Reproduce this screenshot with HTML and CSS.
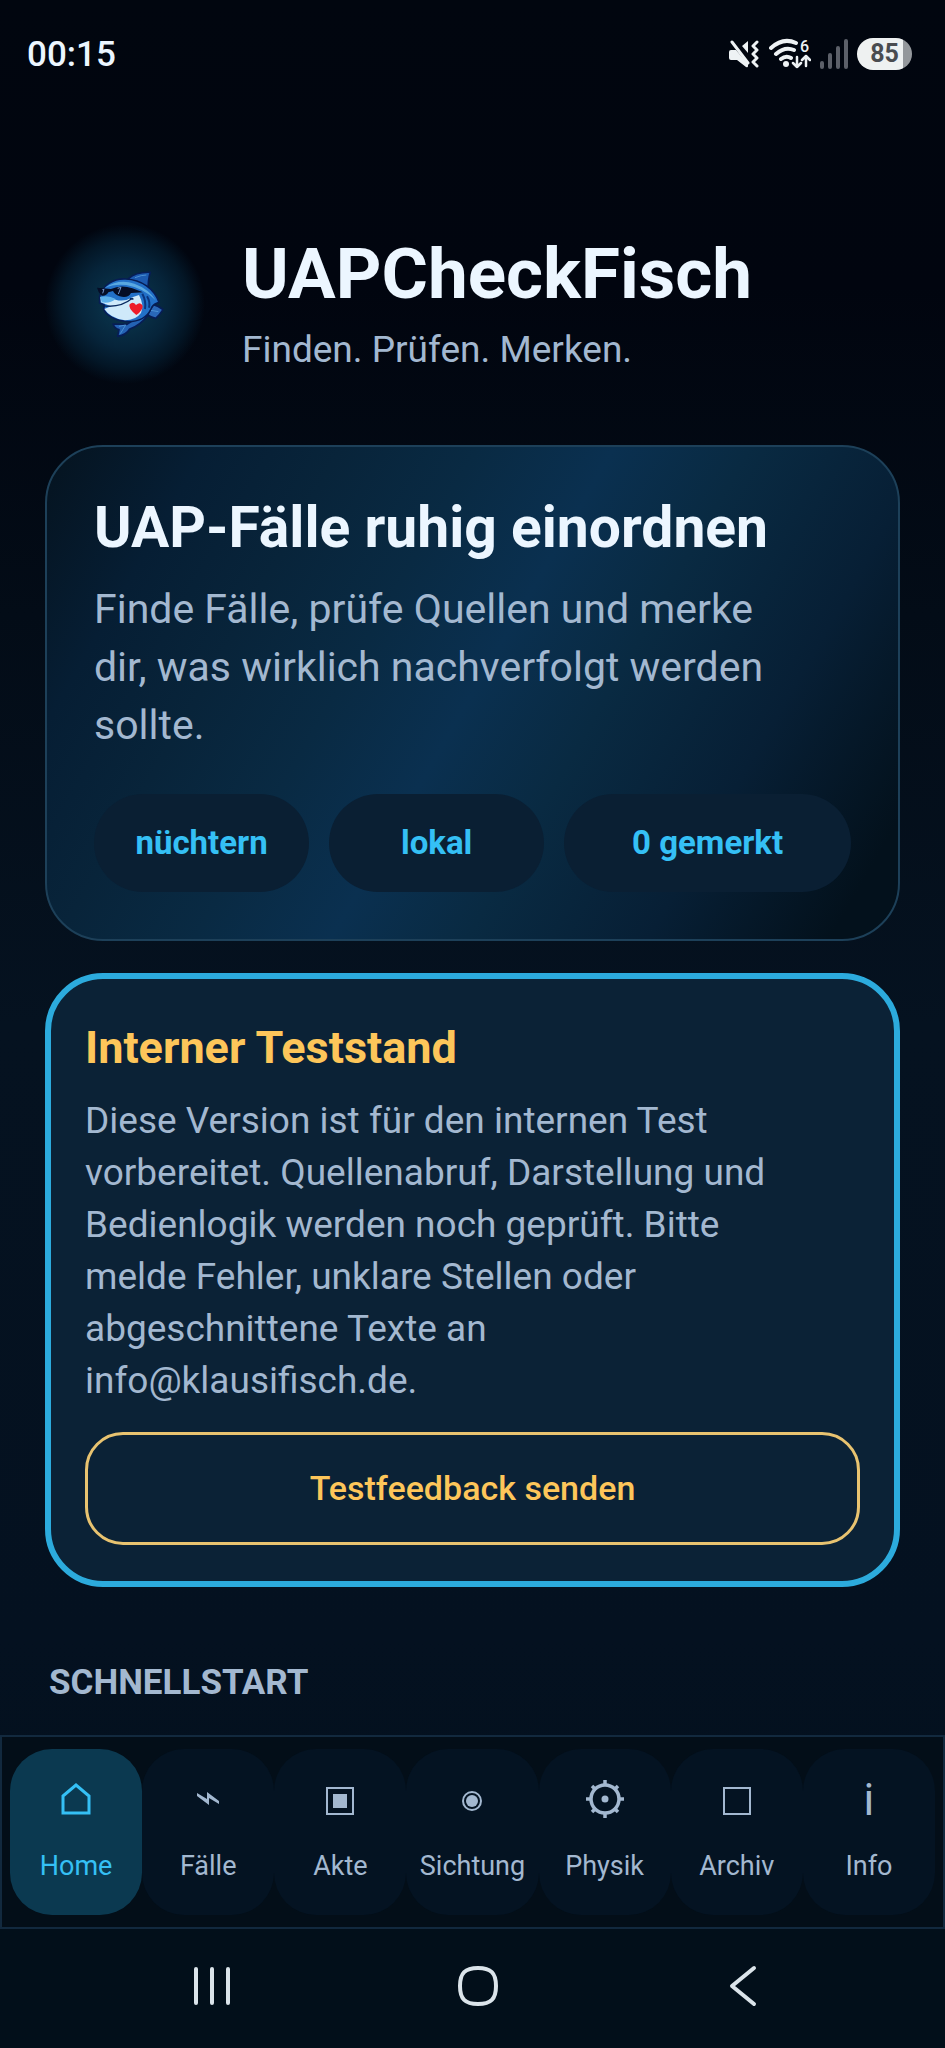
FILE: index.html
```html
<!DOCTYPE html>
<html lang="de">
<head>
<meta charset="utf-8">
<meta name="viewport" content="width=device-width, initial-scale=1">
<title>UAPCheckFisch</title>
<link rel="stylesheet" href="styles.css">
</head>
<body>
<div class="status-bar">
  <time class="clock">00:15</time>
  <div class="status-icons">
    <svg class="ic-mute" viewBox="0 0 31 28" aria-hidden="true">
      <path d="M0 12q0-2 2-2h5L19 24v2q0 2-2 1L8 20H2q-2 0-2-2z M13 6l6-5v12z" fill="currentColor"/>
      <path d="M3 2l16 21" stroke="currentColor" stroke-width="3" stroke-linecap="round"/>
      <path d="M28 2l-4 4 4 4-4 4 4 4-4 4 4 4" fill="none" stroke="currentColor" stroke-width="3" stroke-linecap="round" stroke-linejoin="round"/>
    </svg>
    <svg class="ic-wifi" viewBox="0 -3 42 37" aria-hidden="true">
      <g fill="none" stroke="currentColor" stroke-width="4" stroke-linecap="round" stroke-linejoin="round">
        <path d="M2 9Q14-2 27 4M7 15Q16 7 25 11M12 20q5-4 10-1"/>
        <path stroke-width="2.500" d="M28 18v10m-4-4l4 4 4-4M37 27V17m-4 4l4-4 4 4"/>
      </g>
      <circle cx="17" cy="25" r="3" fill="currentColor"/>
      <text x="31" y="13" class="wifi-gen">6</text>
    </svg>
    <svg class="ic-signal" viewBox="0 0 28 30" aria-hidden="true">
      <path d="M2 24v4M10 16v12M18 9v19M26 2v26" stroke="currentColor" stroke-width="4" stroke-linecap="round"/>
    </svg>
    <span class="battery">85</span>
  </div>
</div>

<main class="content">
  <header class="brand">
    <svg class="logo" viewBox="18 45 480 480" role="img" aria-label="Fisch mit Sonnenbrille">
      <g stroke="#071d55" stroke-width="5" stroke-linejoin="round">
        <path d="M268 209Q292 188 334 190Q326 215 328 246L300 232Z" fill="#1c5ab0"/>
        <path d="M326 318L342 286Q358 290 372 302Q362 318 350 328Q338 326 326 318Z" fill="#2a67b8"/>
        <path d="M264 346Q244 346 222 345Q228 360 240 362L236 382Q262 378 272 360Q300 352 328 318L300 322Z" fill="#2462b4"/>
        <path d="M182 262C190 230 222 208 260 210C308 212 346 240 360 280C352 284 342 284 336 300C324 326 300 338 266 338C228 336 200 318 194 300L196 288L182 282Z" fill="#2270c8"/>
      </g>
      <path d="M198 236Q240 208 286 224Q330 240 350 274Q312 236 262 228Q226 224 198 236Z" fill="#5aa8e0"/>
      <path d="M184 264Q214 262 230 272Q256 280 282 264L300 258Q316 288 306 312Q290 334 258 334Q214 328 196 300L216 292L186 280Z" fill="#cfe9fa"/>
      <path d="M184 264Q208 258 230 270Q214 284 188 280Z" fill="#5db0ea"/>
      <path d="M198 291Q246 296 280 268M274 269l8 1" fill="none" stroke="#0a2a60" stroke-width="4" stroke-linecap="round"/>
      <path d="M174 236L216 240Q246 226 280 238L312 250L276 252Q268 268 242 262Q226 256 222 246L208 250Q202 262 188 260Q178 252 174 236Z" fill="#050d26"/>
      <path d="M236 238l10-3-8 20M190 242l5-1-4 12" fill="none" stroke="#6f92c8" stroke-width="3"/>
      <path d="M310 254Q322 276 318 300M324 262Q334 278 330 296" fill="none" stroke="#0b357e" stroke-width="6"/>
      <path d="M240 352l20-4-16 26M336 304l22 4M288 206q20-8 34-8" fill="none" stroke="#4b90d2" stroke-width="3"/>
      <path d="M292 318Q266 298 272 286Q282 276 291 288Q304 276 311 290Q312 304 292 318Z" fill="#ee1c2a"/>
    </svg>
    <div class="brand-text">
      <h1>UAPCheckFisch</h1>
      <p>Finden. Prüfen. Merken.</p>
    </div>
  </header>

  <section class="card hero">
    <h2>UAP-Fälle ruhig einordnen</h2>
    <p>Finde Fälle, prüfe Quellen und merke dir, was wirklich nachverfolgt werden sollte.</p>
    <ul class="chips">
      <li>nüchtern</li>
      <li>lokal</li>
      <li>0 gemerkt</li>
    </ul>
  </section>

  <section class="card notice">
    <h2>Interner Teststand</h2>
    <p>Diese Version ist für den internen Test vorbereitet. Quellenabruf, Darstellung und Bedienlogik werden noch geprüft. Bitte melde Fehler, unklare Stellen oder abgeschnittene Texte an info@klausifisch.de.</p>
    <button type="button" class="outline-button">Testfeedback senden</button>
  </section>

  <h2 class="section-label">SCHNELLSTART</h2>
</main>

<nav class="tabs">
  <a class="tab active" href="#home" aria-current="page">
    <svg viewBox="0 0 44 44" aria-hidden="true"><path d="M9 18L22 7l13 11v17H9z" fill="none" stroke="currentColor" stroke-width="3"/></svg>
    <span>Home</span>
  </a>
  <a class="tab" href="#faelle">
    <svg viewBox="0 0 44 44" aria-hidden="true"><path d="M11 15L21 21V14L33 23V26L23 20V27L11 18Z" fill="currentColor"/></svg>
    <span>Fälle</span>
  </a>
  <a class="tab" href="#akte">
    <svg viewBox="0 0 44 44" aria-hidden="true"><path d="M9 10h26v26H9z" fill="none" stroke="currentColor" stroke-width="2"/><path d="M15 16h14v14H15z" fill="currentColor"/></svg>
    <span>Akte</span>
  </a>
  <a class="tab" href="#sichtung">
    <svg viewBox="0 0 44 44" aria-hidden="true"><circle cx="22" cy="23" r="9" fill="none" stroke="currentColor" stroke-width="2"/><circle cx="22" cy="23" r="6" fill="currentColor"/></svg>
    <span>Sichtung</span>
  </a>
  <a class="tab" href="#physik">
    <svg viewBox="0 0 44 44" aria-hidden="true"><circle cx="22" cy="21" r="14" fill="none" stroke="currentColor" stroke-width="3.500"/><circle cx="22" cy="21" r="3.500" fill="currentColor"/><path d="M22 2v5M22 35v5M3 21h5M36 21h5M9 8l4 4M31 30l4 4M35 8l-4 4M13 30l-4 4" stroke="currentColor" stroke-width="3.500"/></svg>
    <span>Physik</span>
  </a>
  <a class="tab" href="#archiv">
    <svg viewBox="0 0 44 44" aria-hidden="true"><path d="M9 10h26v26H9z" fill="none" stroke="currentColor" stroke-width="2"/></svg>
    <span>Archiv</span>
  </a>
  <a class="tab" href="#info">
    <span class="glyph" aria-hidden="true">i</span>
    <span>Info</span>
  </a>
</nav>

<div class="system-bar">
  <button type="button" aria-label="Letzte Apps"><svg viewBox="0 0 44 44"><path d="M6 5v34M22 5v34M38 5v34" /></svg></button>
  <button type="button" aria-label="Startbildschirm"><svg viewBox="0 0 44 44"><path d="M22 4C35 4 40 9 40 22S35 40 22 40 4 35 4 22 9 4 22 4Z"/></svg></button>
  <button type="button" aria-label="Zurück"><svg viewBox="0 0 44 44"><path d="M33 4L11 22l22 18"/></svg></button>
</div>
</body>
</html>
```

FILE: styles.css
```css
:root {
  --text: #ecf6ff;
  --muted: #a3b8d0;
  --accent: #35c0f5;
  --gold: #fdc65a;
}

* {
  box-sizing: border-box;
}

body {
  margin: 0;
  min-height: 100vh;
  display: flex;
  flex-direction: column;
  background: linear-gradient(#01060f 0, #01050f 14%, #030c17 30%, #051220 50%, #041120 80%, #03101c 100%);
  color: var(--text);
  font-family: Roboto, "Noto Sans", sans-serif;
}

h1,
h2,
p,
ul {
  margin: 0;
  padding: 0;
}

.status-bar {
  display: flex;
  align-items: center;
  justify-content: space-between;
  height: 108px;
  padding: 0 33px 0 27px;
}

.clock {
  font-size: 35px;
  font-weight: 500;
}

.status-icons {
  display: flex;
  align-items: center;
  gap: 9px;
  color: #eef2f4;
}

.ic-mute { width: 31px; height: 28px; }
.ic-wifi { width: 42px; height: 37px; }
.ic-signal { width: 28px; height: 30px; color: #5c6069; }

.wifi-gen {
  fill: currentColor;
  font-size: 16px;
  font-weight: 500;
}

.battery {
  width: 55px;
  border-radius: 16px;
  background: linear-gradient(90deg, #eef1f1 84%, #94989c 84%);
  color: #4a4c50;
  font-size: 25px;
  font-weight: 700;
  line-height: 32px;
  text-align: center;
}

.content {
  display: flex;
  flex: 1;
  flex-direction: column;
  gap: 32px;
  padding: 116px 45px 30px;
}

.brand {
  display: flex;
  align-items: center;
  gap: 37px;
  margin-bottom: 29px;
}

.logo {
  flex: none;
  width: 160px;
  height: 160px;
  border-radius: 50%;
  background: radial-gradient(circle closest-side, #0a344c 0, #082e45 30%, #06243a 55%, #031626 80%, transparent 100%);
}

.brand-text {
  display: grid;
  gap: 12px;
}

.brand h1 {
  font-size: 71px;
  line-height: 80px;
}

.brand p {
  color: var(--muted);
  font-size: 37px;
  line-height: 48px;
}

.card {
  border-radius: 58px;
}

.card p {
  padding-right: 80px;
  color: var(--muted);
}

.hero {
  padding: 47px;
  border: 2px solid #1d4059;
  background: linear-gradient(120deg, #05131f 0, #061e34 14%, #08243a 26%, #092a43 38%, #0a3050 50%, #092a42 62%, #071f35 78%, #03111c 94%);
}

.hero h2 {
  font-size: 57px;
  line-height: 68px;
}

.hero p {
  margin-top: 18px;
  font-size: 41px;
  line-height: 58px;
}

.chips {
  display: grid;
  grid-template-columns: 3fr 3fr 4fr;
  gap: 20px;
  margin-top: 40px;
  list-style: none;
}

.chips li {
  padding: 28px 0;
  border-radius: 50px;
  background: #0a1f33;
  color: var(--accent);
  font-size: 33px;
  font-weight: 700;
  line-height: 42px;
  text-align: center;
}

.notice {
  display: flex;
  flex-direction: column;
  padding: 41px 34px 36px;
  border: 6px solid #2cabdd;
  background: #0b2236;
}

.notice h2 {
  color: var(--gold);
  font-size: 45px;
  line-height: 56px;
}

.notice p {
  margin-top: 19px;
  font-size: 37px;
  line-height: 52px;
}

.outline-button {
  margin-top: 25px;
  padding: 32px;
  border: 3px solid #e8c370;
  border-radius: 38px;
  background: none;
  color: var(--gold);
  font: 500 34px/43px Roboto, "Noto Sans", sans-serif;
}

.section-label {
  margin-top: 42px;
  padding-left: 4px;
  color: var(--muted);
  font-size: 35px;
  line-height: 44px;
}

.tabs {
  display: grid;
  grid-template-columns: repeat(7, 1fr);
  padding: 12px 8px;
  border: 2px solid #12293e;
  background: #030e18;
}

.tab {
  display: flex;
  flex-direction: column;
  align-items: center;
  gap: 28px;
  padding: 29px 0 33px;
  border-radius: 42px;
  background: #041322;
  color: var(--muted);
  font-size: 27px;
  line-height: 32px;
  text-decoration: none;
}

.tab.active {
  background: #0b3950;
  color: var(--accent);
}

.tab svg {
  width: 44px;
  height: 44px;
}

.glyph {
  font-size: 44px;
  line-height: 44px;
}

.system-bar {
  display: flex;
  justify-content: space-between;
  align-items: center;
  height: 119px;
  padding: 0 180px 6px 190px;
  background: #020f1a;
}

.system-bar button {
  display: flex;
  padding: 0;
  border: 0;
  background: none;
  color: #dbe4ea;
}

.system-bar svg {
  width: 44px;
  height: 44px;
  fill: none;
  stroke: currentColor;
  stroke-width: 4;
  stroke-linecap: round;
  stroke-linejoin: round;
}
```
